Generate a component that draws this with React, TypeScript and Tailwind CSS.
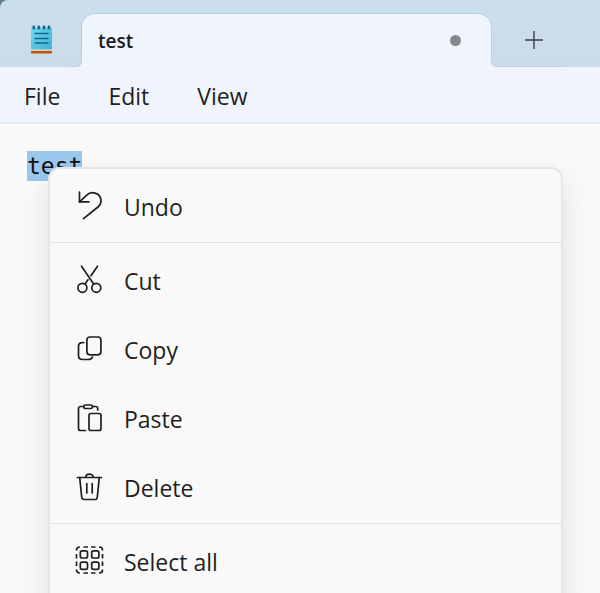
import { useEffect, useRef, type ReactNode } from 'react'

const MENUS = ['File', 'Edit', 'View']

function NotepadLogo() {
  return (
    <svg viewBox="0 0 22 30" className="h-[30px] w-[22px]" aria-hidden="true">
      <defs>
        <linearGradient id="pad" x1="0" y1="0" x2="1" y2="1">
          <stop offset="0" stopColor="#6fd8ee" />
          <stop offset="1" stopColor="#40b3d6" />
        </linearGradient>
      </defs>
      <rect x="0" y="25" width="21" height="4.5" rx="1" fill="#b9560c" />
      <rect x="0" y="25" width="21" height="1.800" fill="#f1e6dc" />
      <rect x="0" y="3.500" width="21" height="22" rx="1" fill="url(#pad)" />
      <g fill="#14678a">
        <rect x="1.5" y="1.500" width="2.6" height="4" rx="1.2" />
        <rect x="6.5" y="1.500" width="2.6" height="4" rx="1.2" />
        <rect x="11.7" y="1.500" width="2.6" height="4" rx="1.2" />
        <rect x="16.7" y="1.500" width="2.6" height="4" rx="1.2" />
      </g>
      <path
        d="M4 9.500h13M4 14.500h13M4 19h13"
        stroke="#12688c"
        strokeWidth="1.5"
        strokeLinecap="round"
      />
    </svg>
  )
}

function MenuIcon({ children }: { children: ReactNode }) {
  return (
    <svg
      viewBox="0 0 30 30"
      className="h-[30px] w-[30px] shrink-0"
      fill="none"
      stroke="#1f1f1f"
      strokeWidth="1.7"
      strokeLinecap="round"
      strokeLinejoin="round"
      aria-hidden="true"
    >
      {children}
    </svg>
  )
}

const undoIcon = (
  <MenuIcon>
    <path d="M5.500 1v9.800h9.500" />
    <path d="M5.500 10.800 12.500 4.300C18-1 27 2.700 27 9.800c0 2.700-1.200 4.700-3 6.200L9.500 27.700" />
  </MenuIcon>
)

const cutIcon = (
  <MenuIcon>
    <circle cx="8.400" cy="22.800" r="4.500" />
    <circle cx="22.300" cy="22.800" r="4.500" />
    <path d="M7.500 1.200 19.700 19M23.500 1.200 17 10.700M14 14.800 11 19" />
  </MenuIcon>
)

const copyIcon = (
  <MenuIcon>
    <rect x="12.900" y="3" width="14" height="17.800" rx="3" />
    <path d="M9.800 8.500C6 8.500 4.500 9.500 4.500 12v9.500c0 2.800 1.200 4 4 4h5.500c2.500 0 4-.8 4.500-2.500" />
  </MenuIcon>
)

const pasteIcon = (
  <MenuIcon>
    <rect x="9.800" y="2" width="8.700" height="3.500" rx="1.700" />
    <path d="M9.500 3.500H6.500a2 2 0 0 0-2 2v20a2 2 0 0 0 2 2h5M18.700 3.500h3a2 2 0 0 1 2 2V7" />
    <rect x="15" y="10.500" width="12" height="17" rx="2" />
  </MenuIcon>
)

const deleteIcon = (
  <MenuIcon>
    <path d="M3.500 5.500h24M11.700 5.500c0-4.600 7.600-4.600 7.600 0" />
    <path d="m5.700 5.500 2 19.700a2.500 2.500 0 0 0 2.500 2.300h10.600a2.500 2.500 0 0 0 2.500-2.300l2-19.700" />
    <path d="M12.800 11.500v9.500M18.200 11.500v9.500" />
  </MenuIcon>
)

const selectAllIcon = (
  <MenuIcon>
    <g transform="translate(0 -1.500)">
      <g strokeLinecap="butt">
        <path d="M2.500 6V5.500a3 3 0 0 1 3-3H6M25 2.500h.500a3 3 0 0 1 3 3V6M28.500 25v.500a3 3 0 0 1-3 3H25M6 28.500H5.500a3 3 0 0 1-3-3V25" />
        <path d="M9.500 2.500h4.500M17 2.500h4.500M9.500 28.500h4.500M17 28.500h4.500M2.500 9.500v4.500M2.500 17v4.500M28.500 9.500v4.500M28.500 17v4.500" />
      </g>
      <rect x="6.300" y="6.300" width="7.200" height="7.200" rx="1.800" />
      <rect x="17.700" y="6.300" width="7.200" height="7.200" rx="1.800" />
      <rect x="6.300" y="17.700" width="7.200" height="7.200" rx="1.800" />
      <rect x="17.700" y="17.700" width="7.200" height="7.200" rx="1.800" />
    </g>
  </MenuIcon>
)

const GROUPS = [
  [{ label: 'Undo', icon: undoIcon }],
  [
    { label: 'Cut', icon: cutIcon },
    { label: 'Copy', icon: copyIcon },
    { label: 'Paste', icon: pasteIcon },
    { label: 'Delete', icon: deleteIcon },
  ],
  [{ label: 'Select all', icon: selectAllIcon }],
]

function ContextMenu() {
  return (
    <div
      role="menu"
      className="absolute -bottom-4 left-[48px] right-[37px] top-[43px] rounded-xl border-2 border-[#e6e6e6] bg-[#f9f9f9] shadow-[0_12px_28px_rgba(0,0,0,0.1)]"
    >
      {GROUPS.map((items) => (
        <div
          key={items[0].label}
          role="group"
          className="border-b border-[#e2e2e2] py-0.5 last:border-b-0"
        >
          {items.map(({ label, icon }) => (
            <button
              key={label}
              type="button"
              role="menuitem"
              className="flex h-[69px] w-full items-center gap-5 px-6 text-left text-[23px] leading-8 text-[#1f1f1f] hover:bg-black/5"
            >
              {icon}
              <span className="pt-0.5">{label}</span>
            </button>
          ))}
        </div>
      ))}
    </div>
  )
}

function TitleBar() {
  return (
    <header className="bg-[#66808f]">
      <div className="flex h-[67px] items-end rounded-tl-lg bg-linear-to-b from-[#cbdfeb] to-[#ccdbec]">
        <div className="flex h-14 w-[81px] shrink-0 items-center justify-center pl-0.5">
          <NotepadLogo />
        </div>
        <div
          role="tab"
          aria-selected="true"
          className="relative flex h-[54px] w-[411px] min-w-0 items-center justify-between rounded-t-[14px] border border-b-0 border-[#bccfe0] bg-[#f0f4fc] pl-4 pr-[30px]"
        >
          <span className="text-[19px] font-semibold leading-6 text-[#1b1b1b]">test</span>
          <span className="size-[11px] rounded-full bg-[#87888c]" />
          <span className="absolute -left-3 bottom-0 h-[7px] w-3 bg-[#f0f4fc]">
            <span className="block h-full rounded-br-md border-b border-r border-[#bccfe0] bg-[#ccdbec]" />
          </span>
          <span className="absolute -right-[71px] bottom-0 h-[7px] w-[71px] bg-[#f0f4fc]">
            <span className="block h-full rounded-bl-md border-b border-l border-[#bccfe0] bg-[#ccdbec]" />
          </span>
        </div>
        <button
          type="button"
          aria-label="New tab"
          className="flex h-[54px] w-[84px] shrink-0 items-center justify-center"
        >
          <svg viewBox="0 0 18 18" className="size-[18px]" stroke="#3a3d42" strokeWidth="1.4">
            <path d="M9 0v18M0 9h18" />
          </svg>
        </button>
      </div>
    </header>
  )
}

export default function App() {
  const editorRef = useRef<HTMLTextAreaElement>(null)

  useEffect(() => {
    editorRef.current?.focus()
    editorRef.current?.select()
  }, [])

  return (
    <div className="flex h-screen flex-col overflow-hidden bg-[#f9f9f9] font-['Open_Sans','Noto_Sans',sans-serif]">
      <TitleBar />
      <nav className="flex gap-12 border-b-2 border-[#e4e9ef] bg-[#f0f4fc] px-6 pb-2.5 pt-[13px]">
        {MENUS.map((label) => (
          <button key={label} type="button" className="text-[23px] leading-8 text-[#1f1f1f]">
            {label}
          </button>
        ))}
      </nav>
      <main className="relative min-h-0 flex-1">
        <textarea
          ref={editorRef}
          aria-label="Text editor"
          defaultValue="test"
          spellCheck={false}
          className="block h-full w-full resize-none bg-transparent px-[27px] pt-[27px] font-['DejaVu_Sans_Mono',monospace] text-[23px] leading-[30px] text-[#111] outline-none selection:bg-[#99c7ed] selection:text-[#111]"
        />
        <ContextMenu />
      </main>
    </div>
  )
}
